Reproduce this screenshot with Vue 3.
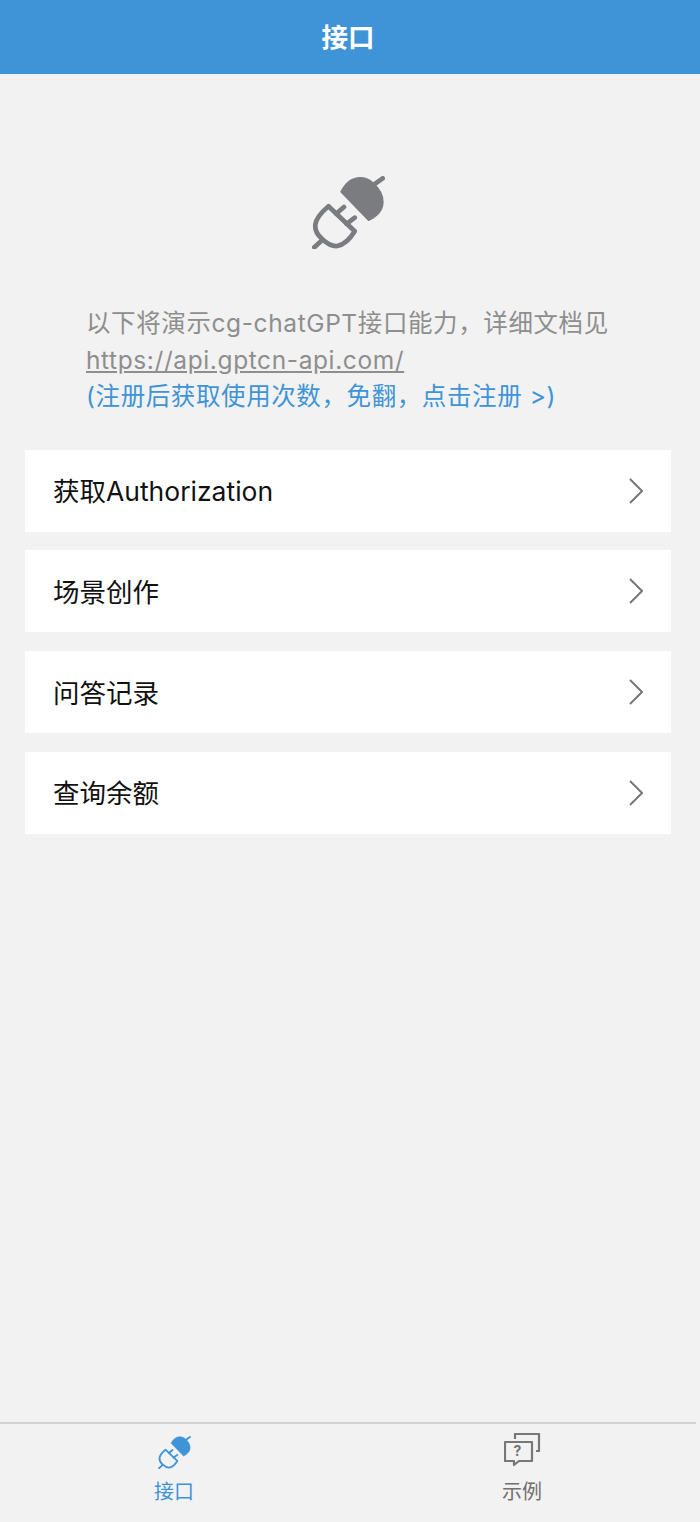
<script setup>
const rows = ['获取Authorization', '场景创作', '问答记录', '查询余额']
</script>

<template>
  <div class="page">
    <header class="top">接口</header>
    <main class="main">
      <svg class="hero" viewBox="65 48 217 217" aria-hidden="true">
        <g class="plug">
          <path class="head" d="M151 95C165 68 185 53 208 53C225 53 238 60 248 70C265 85 276 105 276 125C276 148 258 168 233 180Z" />
          <path class="line" d="M250 73L275 55" />
          <path class="line" d="M114 138L192 212C178 235 160 252 140 256C122 258 108 247 95 235C82 224 73 210 75 192C78 172 95 154 114 138Z" />
          <path class="line" d="M137 160L160 140M168 190L192 172M94 240L72 260" />
        </g>
      </svg>
      <div class="intro">
        <div>以下将演示cg-chatGPT接口能力，详细文档见</div>
        <a class="link">https://api.gptcn-api.com/</a>
        <div class="register">(注册后获取使用次数，免翻，点击注册 &gt;)</div>
      </div>
      <ul class="list">
        <li v-for="row in rows" :key="row" class="row">
          <span class="label">{{ row }}</span>
          <svg class="chev" viewBox="0 0 14 26" aria-hidden="true"><path d="M1 1L13 13L1 25" /></svg>
        </li>
      </ul>
    </main>
    <nav class="tabs">
      <div class="tab active">
        <svg class="tab-plug" viewBox="65 48 217 217" aria-hidden="true">
          <g class="plug">
            <path class="head" d="M151 95C165 68 185 53 208 53C225 53 238 60 248 70C265 85 276 105 276 125C276 148 258 168 233 180Z" />
            <path class="line" d="M250 73L275 55" />
            <path class="line" d="M114 138L192 212C178 235 160 252 140 256C122 258 108 247 95 235C82 224 73 210 75 192C78 172 95 154 114 138Z" />
            <path class="line" d="M137 160L160 140M168 190L192 172M94 240L72 260" />
          </g>
        </svg>
        <span>接口</span>
      </div>
      <div class="tab">
        <span class="ask">
          <svg viewBox="0 0 37 34" aria-hidden="true">
            <path d="M11 6V1H35V18H32" />
            <path d="M1 9H28V28H15L10 32V28H1Z" />
          </svg>
          <b>?</b>
        </span>
        <span>示例</span>
      </div>
    </nav>
  </div>
</template>

<style>
body { margin: 0; background: #f2f2f2; }
</style>

<style scoped>
.page {
  width: 700px;
  height: 1522px;
  display: flex;
  flex-direction: column;
  background: #f2f2f2;
  font-family: Inter, "Noto Sans CJK SC", sans-serif;
}
.top {
  height: 74px;
  flex: none;
  box-sizing: border-box;
  padding: 0 4px 4px 0;
  display: flex;
  align-items: center;
  justify-content: center;
  background: #3f94d7;
  color: #fff;
  font-size: 26.5px;
  font-weight: 700;
}
.main { flex: 1; display: flex; flex-direction: column; align-items: flex-start; }
.hero { width: 73px; height: 73px; margin: 102px 0 0 312px; }
.plug { fill: none; stroke: #7b7c7f; }
.plug .head { fill: #7b7c7f; stroke-width: 4; stroke-linejoin: round; }
.plug .line { stroke-width: 14; stroke-linejoin: round; stroke-linecap: round; }
.intro {
  margin: 56px 0 0 86px;
  width: 560px;
  font-size: 24.5px;
  letter-spacing: 0.6px;
  line-height: 36.5px;
  color: #8e8e8e;
}
.link { display: block; text-decoration: underline; }
.register { color: #3f94d7; }
.list {
  list-style: none;
  margin: 35px 0 0 25px;
  padding: 0;
  width: 646px;
  display: flex;
  flex-direction: column;
  gap: 18.8px;
}
.row {
  height: 82px;
  box-sizing: border-box;
  padding: 0 28px;
  display: flex;
  align-items: center;
  justify-content: space-between;
  background: #fff;
  color: #111;
  font-size: 26.5px;
}
.label { position: relative; top: -1px; }
.chev { width: 14px; height: 26px; fill: none; stroke: #777; stroke-width: 2; }
.tabs {
  width: 696px;
  height: 100px;
  flex: none;
  box-sizing: border-box;
  border-top: 2px solid #d2d2d2;
  display: grid;
  grid-template-columns: 1fr 1fr;
}
.tab {
  display: flex;
  flex-direction: column;
  align-items: center;
  color: #707070;
  font-size: 20px;
  line-height: 26px;
}
.tab.active { color: #3f94d7; }
.tab-plug { width: 33px; height: 33px; margin: 12px 0 10px; }
.tab-plug .plug { stroke: #3f94d7; }
.tab-plug .plug .head { fill: #3f94d7; }
.tab-plug .plug .line { stroke-width: 12; }
.ask { position: relative; width: 37px; height: 34px; margin: 9px 0 12px; }
.ask svg { display: block; width: 37px; height: 34px; fill: none; stroke: #777; stroke-width: 2.2; stroke-linejoin: round; }
.ask b {
  position: absolute;
  left: 5px;
  top: 10px;
  width: 18px;
  text-align: center;
  font-size: 14px;
  line-height: 16px;
}
</style>
